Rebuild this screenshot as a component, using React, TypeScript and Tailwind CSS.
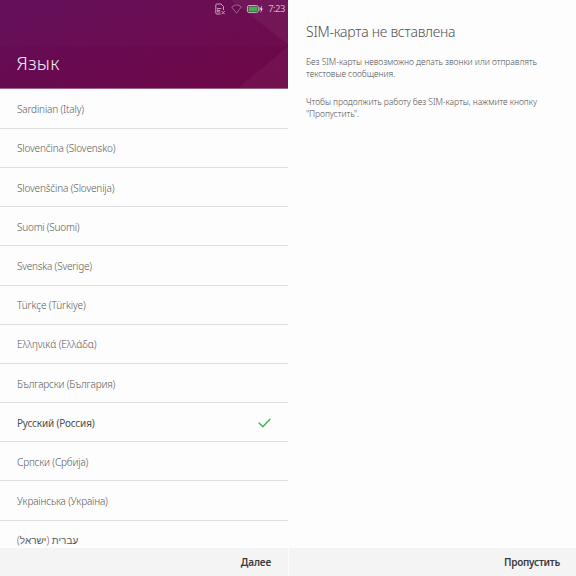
import { clsx } from "clsx";

interface Language {
  label: string;
  className?: string;
  rtl?: boolean;
}

const SELECTED = "Русский (Россия)";

const LANGUAGES: Language[] = [
  { label: "Sardinian (Italy)", className: "tracking-[-0.16px]" },
  { label: "Slovenčina (Slovensko)", className: "tracking-[-0.14px]" },
  { label: "Slovenščina (Slovenija)", className: "tracking-[-0.14px]" },
  { label: "Suomi (Suomi)", className: "tracking-[-0.23px]" },
  { label: "Svenska (Sverige)", className: "tracking-[-0.2px]" },
  { label: "Türkçe (Türkiye)", className: "tracking-[-0.1px]" },
  { label: "Ελληνικά (Ελλάδα)", className: "tracking-[-0.12px]" },
  { label: "Български (България)", className: "tracking-[-0.2px]" },
  { label: "Русский (Россия)", className: "tracking-[-0.19px]" },
  { label: "Српски (Србија)", className: "tracking-[-0.18px]" },
  { label: "Українська (Україна)", className: "tracking-[-0.18px]" },
  { label: "עברית (ישראל)", rtl: true },
];

function StatusBar() {
  return (
    <div className="relative flex h-[17px] items-center justify-end pr-[3px] text-[#c9a3bb]">
      {/* SIM missing */}
      <svg className="mr-[5px] h-3 w-[11px]" viewBox="0 0 11 12" fill="none" stroke="currentColor">
        <path d="M5.5 11H1.7Q.8 11 .8 10V2Q.8 1 1.8 1H6l2.5 2.5V7" strokeWidth="1" />
        <path d="M2.5 5.5h3.8M2.5 7.5h2.8M2.5 9h2.8M2.7 5.2v4" strokeWidth=".9" />
        <path d="M6.5 8l3.3 3.3M9.8 8l-3.3 3.3" strokeWidth=".9" />
      </svg>
      {/* Wi-Fi off */}
      <svg className="mr-[5px] h-[10px] w-[11px] opacity-60" viewBox="0 0 11 10" fill="none" stroke="currentColor">
        <path d="M.7 3Q5.5-1.2 10.3 3L5.5 9.2Z" strokeWidth=".9" strokeLinejoin="round" />
      </svg>
      {/* Battery charging */}
      <svg className="mr-[5px] h-[10px] w-4" viewBox="0 0 16 10">
        <rect x=".5" y="1.5" width="10.7" height="7" rx="1.5" fill="none" stroke="currentColor" />
        <path d="M1.6 2.5h8.5v5H1.6z" fill="#3fb24f" />
        <path d="M11.5 3h1v4h-1z" fill="currentColor" />
        <path d="M14.8 1.2L12.7 5.4h1.3l-.5 3.5 2.3-4.4h-1.3z" fill="#f0e2eb" />
      </svg>
      <span className="text-[9.5px] leading-[17px] tracking-[-0.5px] text-[#d3b3c8]">7:23</span>
    </div>
  );
}

function Header() {
  return (
    <header className="relative h-[89px] shrink-0 overflow-hidden border-b border-[#9b6485] bg-linear-[160deg] from-[#620c59] via-[#690a50] to-[#6e0845]">
      {/* Folded paper background */}
      <svg className="absolute inset-0 h-full w-full" viewBox="0 0 288 89" preserveAspectRatio="none">
        <path d="M0 0H288V47H0Z" fill="#fff" fillOpacity=".015" />
        <path d="M231 0H288V45Z" fill="#fff" fillOpacity=".045" />
        <path d="M288 47V89H238Z" fill="#fff" fillOpacity=".04" />
      </svg>
      <StatusBar />
      <h1 className="relative mt-[32px] pl-[16.5px] text-[18.5px] leading-7 font-light tracking-[0.2px] text-[#f3e9f0]">
        Язык
      </h1>
    </header>
  );
}

function LanguageRow({ label, className, rtl }: Language) {
  const selected = label === SELECTED;

  return (
    <li
      className={clsx(
        "flex h-[39.2px] shrink-0 items-center justify-between border-b border-[#dedede] pt-[2px] pr-[17px] pl-[17px] text-[10px]",
        selected ? "text-[#4c4c4c]" : "font-light text-[#585858]",
      )}
    >
      <span dir={rtl ? "rtl" : "ltr"} className={clsx("whitespace-nowrap", className)}>
        {label}
      </span>
      {selected && (
        <svg className="mb-px h-[10px] w-[13px]" viewBox="0 0 13 10" fill="none" stroke="#3eb34f">
          <path d="M.8 4.7l4 4L12.2 1" strokeWidth="1.5" />
        </svg>
      )}
    </li>
  );
}

function Footer({ label, className }: { label: string; className?: string }) {
  return (
    <footer className="flex h-7 shrink-0 items-center justify-end bg-[#f4f4f4] text-[10px] font-semibold text-[#3a3a3a]">
      <span className={clsx("whitespace-nowrap", className)}>{label}</span>
    </footer>
  );
}

export default function App() {
  return (
    <div className="flex h-[576px] w-[576px] overflow-hidden bg-[#fdfdfd] font-['Noto_Sans','DejaVu_Sans',sans-serif]">
      <section className="flex w-[288px] flex-col">
        <Header />
        <ul className="flex min-h-0 flex-1 flex-col overflow-hidden pt-[0.6px]">
          {LANGUAGES.map((language) => (
            <LanguageRow key={language.label} {...language} />
          ))}
        </ul>
        <Footer label="Далее" className="pr-[17px] tracking-[-0.15px]" />
      </section>

      <section className="ml-px flex w-[287px] flex-col">
        <div className="flex-1 pt-[22px] pl-[17px] text-[8.5px] leading-[11.6px] font-light text-[#505050]">
          <h2 className="text-[14px] leading-5 tracking-[-0.26px] whitespace-nowrap">
            SIM-карта не вставлена
          </h2>
          <p className="mt-[14px] tracking-[-0.045px] whitespace-nowrap">
            Без SIM-карты невозможно делать звонки или отправлять
            <br />
            текстовые сообщения.
          </p>
          <p className="mt-[17px] tracking-[-0.045px] whitespace-nowrap">
            Чтобы продолжить работу без SIM-карты, нажмите кнопку
            <br />
            "Пропустить".
          </p>
        </div>
        <Footer label="Пропустить" className="pr-[16px] tracking-[-0.25px]" />
      </section>
    </div>
  );
}
